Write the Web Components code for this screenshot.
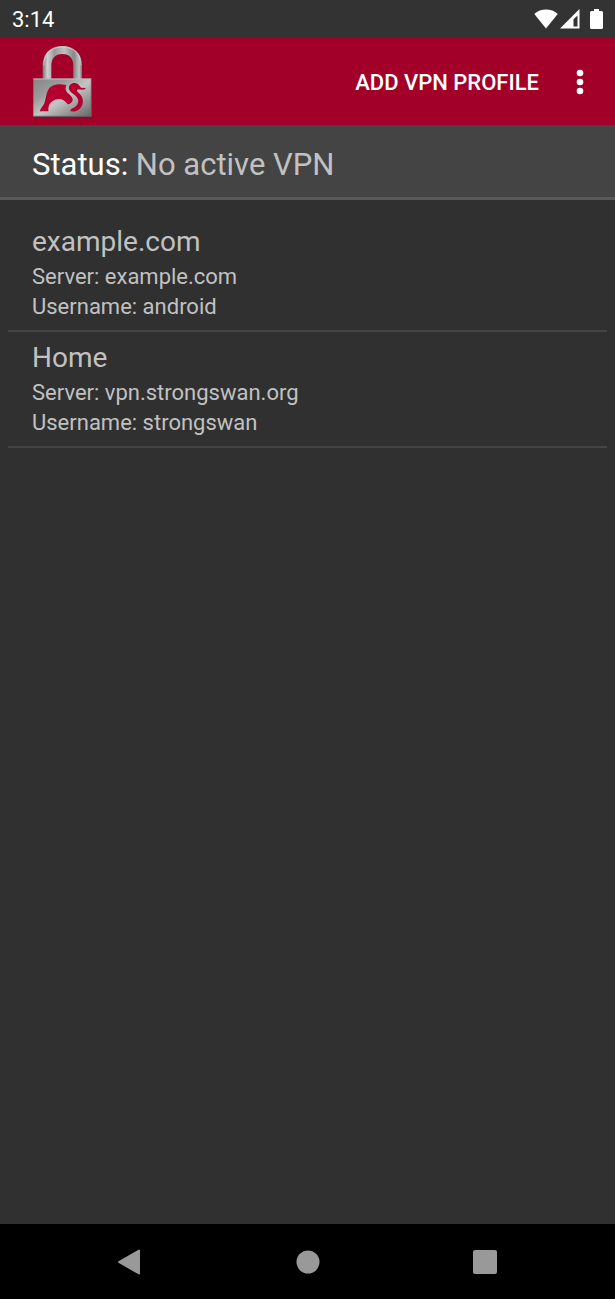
<!DOCTYPE html>
<html lang="en">
<head>
<meta charset="utf-8">
<meta name="viewport" content="width=device-width, initial-scale=1">
<title>strongSwan VPN Client</title>
<style>
  body { margin: 0; background: #303030; color: #c1c1c1; font-family: Roboto, "Noto Sans", sans-serif; }
</style>
</head>
<body>
<vpn-screen>
  <system-bar slot="top" time="3:14"></system-bar>
  <app-bar slot="top" action="Add VPN profile"></app-bar>
  <vpn-status label="Status:" slot="top">No active VPN</vpn-status>
  <vpn-profile server="example.com" username="android">example.com</vpn-profile>
  <vpn-profile server="vpn.strongswan.org" username="strongswan">Home</vpn-profile>
  <nav-bar slot="bottom"></nav-bar>
</vpn-screen>
<script>
class BaseElement extends HTMLElement {
  connectedCallback() {
    if (!this.shadowRoot) this.attachShadow({ mode: "open" }).innerHTML = this.render();
  }
  attr(name) { return this.getAttribute(name) || ""; }
}

customElements.define("vpn-screen", class extends BaseElement {
  render() {
    return `<style>
      :host { display: flex; flex-direction: column; min-height: 100vh; background: #303030; }
      main { flex: 1; padding: 16px 8px; }
    </style>
    <slot name="top"></slot><main><slot></slot></main><slot name="bottom"></slot>`;
  }
});

customElements.define("system-bar", class extends BaseElement {
  render() {
    return `<style>
      :host { display: flex; align-items: center; height: 38px; padding: 0 12px; background: #333; color: #fff; font-size: 22px; line-height: 36px; }
      span { flex: 1; padding-top: 2px; }
      svg { display: block; fill: #fff; }
      .battery { margin-left: 10px; }
      .signal { margin-left: 2px; }
    </style>
    <span>${this.attr("time")}</span>
    <svg width="24" height="20" viewBox="0 0 24 20" aria-hidden="true"><path d="M.3 5C6.500-.9 17.500-.9 23.700 5L12 19.500Z"/></svg>
    <svg class="signal" width="20" height="20" viewBox="0 0 20 20" aria-hidden="true"><path fill-rule="evenodd" d="M19.500 0V19.500H0ZM17.500 6.500L13.500 10.200V17.500H17.500Z"/></svg>
    <svg class="battery" width="13" height="20" viewBox="0 0 13 20" aria-hidden="true"><path d="M4 0H9V2H11.500Q13 2 13 3.500V18.500Q13 20 11.500 20H1.500Q0 20 0 18.500V3.500Q0 2 1.500 2H4Z"/></svg>`;
  }
});

customElements.define("app-bar", class extends BaseElement {
  render() {
    return `<style>
      :host { display: flex; align-items: center; height: 87px; padding: 0 16px 0 32px; background: #a30029; color: #fff; }
      .logo { display: block; margin-right: auto; }
      button { font: inherit; color: inherit; background: none; border: 0; padding: 0; cursor: pointer; }
      .action { padding-top: 2px; font-size: 22px; line-height: 48px; font-weight: 500; text-transform: uppercase; white-space: nowrap; }
      .more { display: flex; justify-content: center; width: 38px; padding: 11px 0; margin-left: 22px; }
      .more svg { fill: #fff; }
    </style>
    <svg class="logo" width="62" height="72" viewBox="24 24 186 216" role="img" aria-label="strongSwan">
      <defs>
        <linearGradient id="body" x1="0" y1="0" x2="1" y2="1">
          <stop offset="0" stop-color="#858585"/><stop offset=".3" stop-color="#9c9c9c"/><stop offset=".52" stop-color="#c4c4c4"/><stop offset=".75" stop-color="#969696"/><stop offset="1" stop-color="#666"/>
        </linearGradient>
        <linearGradient id="shackle" x1="0" y1="0" x2="1" y2="0">
          <stop offset="0" stop-color="#777"/><stop offset=".12" stop-color="#d0d0d0"/><stop offset=".3" stop-color="#999"/><stop offset=".55" stop-color="#c0c0c0"/><stop offset=".8" stop-color="#888"/><stop offset=".93" stop-color="#c4c4c4"/><stop offset="1" stop-color="#707070"/>
        </linearGradient>
      </defs>
      <path fill="url(#shackle)" d="M56 124V82C56 46 80 24 115 24S174 46 174 82V124H148V83C148 61 136 48 115 48S82 61 82 83V124Z"/>
      <path fill="none" stroke="#ddd" stroke-width="2" d="M59 82C59 47 82 27 115 27S171 47 171 82"/>
      <rect x="28" y="122" width="174" height="114" fill="url(#body)"/>
      <path d="M28 123H202" stroke="#c0c0c0" stroke-width="3"/>
      <path d="M28 235H202V122" fill="none" stroke="#5c5c5c" stroke-width="3"/>
      <g fill="#b3002f">
        <path d="M47 220C51 210 57 204 61 196C66 183 66 164 76 150C85 139 105 136 127 141C124 150 123 158 132 166C142 174 149 182 145 190C142 196 137 198 131 199C120 182 101 178 86 189C76 196 73 205 73 213V220Z"/>
        <path d="M135 153C133 142 142 134 153 135C164 136 167 145 171 149L185 150L183 154C175 156 166 154 159 155C158 160 163 163 168 169C182 183 178 205 164 215C157 220 149 221 138 220C140 217 140 214 143 212C158 207 168 193 160 179C152 168 138 165 135 153Z"/>
      </g>
    </svg>
    <button class="action" type="button">${this.attr("action")}</button>
    <button class="more" type="button" aria-label="More options"><svg width="8" height="26" viewBox="0 0 8 26"><circle cx="4" cy="4" r="3.300"/><circle cx="4" cy="13" r="3.300"/><circle cx="4" cy="22" r="3.300"/></svg></button>`;
  }
});

customElements.define("vpn-status", class extends BaseElement {
  render() {
    return `<style>
      :host { display: block; padding: 21px 32px 14px; background: #444; border-bottom: 3px solid #5a5a5a; font-size: 31px; line-height: 37px; }
      b { font-weight: 400; color: #fff; }
    </style>
    <b>${this.attr("label")}</b> <slot></slot>`;
  }
});

customElements.define("vpn-profile", class extends BaseElement {
  render() {
    return `<style>
      :host { display: block; padding: 7px 24px 8px; border-bottom: 2px solid #454545; font-size: 22px; line-height: 30px; }
      h2 { margin: 0 0 2px; font-size: 28px; line-height: 37px; font-weight: 400; }
      p { margin: 0; }
    </style>
    <h2><slot></slot></h2>
    <p>Server: ${this.attr("server")}</p>
    <p>Username: ${this.attr("username")}</p>`;
  }
});

customElements.define("nav-bar", class extends BaseElement {
  render() {
    return `<style>
      :host { display: flex; height: 75px; padding: 0 41px; background: #000; }
      button { flex: 1; display: flex; align-items: center; justify-content: center; background: none; border: 0; padding: 0; cursor: pointer; }
      svg { fill: #999; }
    </style>
    <button type="button" aria-label="Back"><svg width="26" height="26" viewBox="0 0 26 26"><path stroke="#999" stroke-width="2" stroke-linejoin="round" d="M22 1.500V24.500L2 13Z"/></svg></button>
    <button type="button" aria-label="Home"><svg width="24" height="24" viewBox="0 0 24 24"><circle cx="12" cy="12" r="11.500"/></svg></button>
    <button type="button" aria-label="Recent apps"><svg width="24" height="24" viewBox="0 0 24 24"><rect width="24" height="24" rx="2"/></svg></button>`;
  }
});
</script>
</body>
</html>
